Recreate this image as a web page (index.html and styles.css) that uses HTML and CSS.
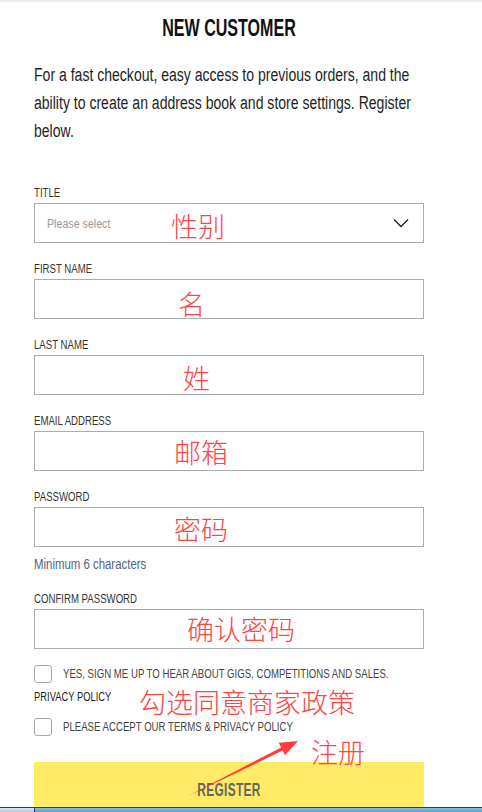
FILE: index.html
```html
<!DOCTYPE html>
<html lang="en">
<head>
<meta charset="utf-8">
<title>New Customer</title>
<link rel="stylesheet" href="styles.css">
</head>
<body>
<div class="topbar"></div>
<main class="page">
  <h1 class="title">NEW CUSTOMER</h1>
  <p class="intro">For a fast checkout, easy access to previous orders, and the<br>ability to create an address book and store settings. Register<br>below.</p>
  <form class="form">
    <div class="field">
      <label class="label">TITLE</label>
      <div class="box select">
        <span class="placeholder">Please select</span>
        <svg class="chevron" width="16" height="10" viewBox="0 0 16 10"><path d="M1 1.5 L8 8.5 L15 1.5" fill="none" stroke="#222" stroke-width="1.4"/></svg>
      </div>
    </div>
    <div class="field">
      <label class="label">FIRST NAME</label>
      <div class="box"></div>
    </div>
    <div class="field">
      <label class="label">LAST NAME</label>
      <div class="box"></div>
    </div>
    <div class="field">
      <label class="label">EMAIL ADDRESS</label>
      <div class="box"></div>
    </div>
    <div class="field">
      <label class="label">PASSWORD</label>
      <div class="box"></div>
      <div class="hint">Minimum 6 characters</div>
    </div>
    <div class="field">
      <label class="label">CONFIRM PASSWORD</label>
      <div class="box"></div>
    </div>
    <div class="check-row">
      <span class="checkbox"></span>
      <span class="check-text">YES, SIGN ME UP TO HEAR ABOUT GIGS, COMPETITIONS AND SALES.</span>
    </div>
    <div class="policy">PRIVACY POLICY</div>
    <div class="check-row check-row-2">
      <span class="checkbox"></span>
      <span class="check-text">PLEASE ACCEPT OUR TERMS &amp; PRIVACY POLICY</span>
    </div>
    <div class="register"><span class="register-text">REGISTER</span></div>
  </form>

  <span class="note note-title">性别</span>
  <span class="note note-first">名</span>
  <span class="note note-last">姓</span>
  <span class="note note-email">邮箱</span>
  <span class="note note-pass">密码</span>
  <span class="note note-confirm">确认密码</span>
  <span class="note note-policy">勾选同意商家政策</span>
  <span class="note note-register">注册</span>
  <svg class="arrow" width="482" height="812" viewBox="0 0 482 812">
    <polygon points="188,796 281.1,747.4 278.8,742.7 298,741 285,755.3 282.7,750.6" fill="#ff3b3b"/>
  </svg>
</main>
<div class="taskbar"><span class="start"></span></div>
</body>
</html>
```
FILE: styles.css
```css
html, body {
  margin: 0;
  padding: 0;
  background: #fff;
  overflow: hidden;
}
body {
  width: 482px;
  height: 812px;
  font-family: "Liberation Sans", Arial, sans-serif;
  color: #222;
}
.topbar {
  height: 2px;
  background: #ececec;
}
.page {
  position: relative;
  padding: 12px 58px 0 34px;
  height: 798px;
}
.title {
  margin: 0;
  text-align: center;
  font-size: 24px;
  line-height: 28px;
  font-weight: bold;
  color: #111;
  transform: scaleX(0.67);
  transform-origin: center;
}
.intro {
  margin: 19px 0 0;
  width: 500px;
  white-space: nowrap;
  font-size: 18px;
  line-height: 28px;
  color: #1e1e24;
  transform: scaleX(0.78);
  transform-origin: left top;
}
.form {
  margin-top: 41px;
  display: flex;
  flex-direction: column;
}
.field {
  display: flex;
  flex-direction: column;
  margin-bottom: 19px;
}
.label {
  font-size: 12.5px;
  line-height: 14px;
  color: #333;
  margin-bottom: 3px;
  white-space: nowrap;
  transform: scaleX(0.77);
  transform-origin: left center;
}
.box {
  height: 38px;
  border: 1px solid #ababab;
  display: flex;
  align-items: center;
  justify-content: space-between;
  padding: 0 14px 0 12px;
}
.placeholder {
  display: inline-block;
  font-size: 13px;
  color: #9a9a9a;
  white-space: nowrap;
  transform: scaleX(0.82);
  transform-origin: left center;
}
.chevron {
  display: block;
}
.hint {
  margin-top: 8px;
  font-size: 14px;
  line-height: 18px;
  color: #4e6680;
  white-space: nowrap;
  transform: scaleX(0.815);
  transform-origin: left center;
}
.check-row {
  display: flex;
  align-items: center;
  gap: 11px;
  margin-top: -3px;
}
.checkbox {
  width: 16px;
  height: 16px;
  border: 1px solid #a8a8a8;
  border-radius: 3px;
  flex: none;
}
.check-text {
  display: inline-block;
  font-size: 12.5px;
  line-height: 16px;
  color: #444;
  white-space: nowrap;
  transform: scaleX(0.77);
  transform-origin: left center;
}
.policy {
  margin-top: 6px;
  font-size: 12.5px;
  line-height: 16px;
  color: #222;
  white-space: nowrap;
  transform: scaleX(0.75);
  transform-origin: left center;
}
.check-row-2 {
  margin-top: 13px;
}
.register {
  margin-top: 26px;
  height: 44px;
  background: #ffeb66;
  display: flex;
  align-items: center;
  justify-content: center;
  padding-top: 6px;
}
.register-text {
  display: inline-block;
  font-size: 18px;
  font-weight: bold;
  letter-spacing: 0.5px;
  color: #666;
  transform: scaleX(0.66);
  transform-origin: center;
}
.note {
  position: absolute;
  font-family: "Noto Sans CJK SC", sans-serif;
  font-weight: 300;
  font-size: 27px;
  line-height: 27px;
  color: #ff4444;
  white-space: nowrap;
}
.note-title { left: 171px; top: 210px; }
.note-first { left: 178px; top: 288px; }
.note-last { left: 183px; top: 362px; }
.note-email { left: 174px; top: 436px; }
.note-pass { left: 174px; top: 513px; }
.note-confirm { left: 187px; top: 613px; }
.note-policy { left: 139px; top: 686px; }
.note-register { left: 311px; top: 736px; }
.arrow {
  position: absolute;
  left: 0;
  top: -2px;
  pointer-events: none;
}
.taskbar {
  position: fixed;
  left: 0;
  right: 0;
  bottom: 0;
  height: 4px;
  border-top: 1px solid #2c3c48;
  background: linear-gradient(#8cc0dc, #5d9fc4);
  display: flex;
}
.start {
  width: 34px;
  border-right: 1px solid #2c3c48;
  background: linear-gradient(#d8eaf4, #a9cde2);
}
```
